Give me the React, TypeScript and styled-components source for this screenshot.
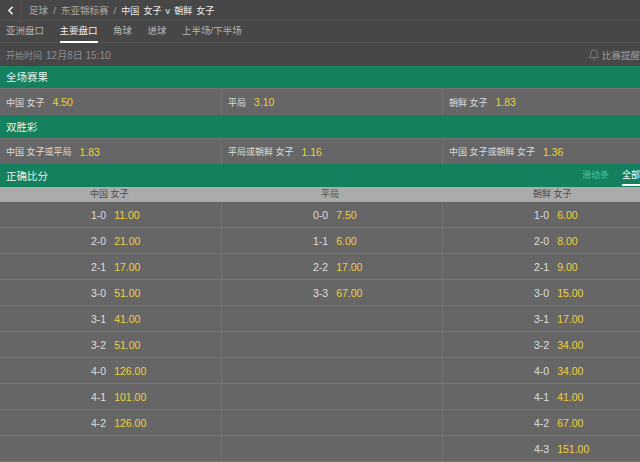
import React from 'react'
import styled, { createGlobalStyle } from 'styled-components'
import { Bell, ChevronLeft } from 'lucide-react'

const GlobalStyle = createGlobalStyle`
html, body {
    margin: 0;
    padding: 0;
    background: #666666;
    overflow: hidden;
}
* {
    box-sizing: border-box;
}
`
const Page = styled.div`
width: 640px;
height: 462px;
overflow: hidden;
font-family: "Liberation Sans", "Noto Sans CJK SC", sans-serif;
font-size: 9.5px;
color: #dcdcdc;
background: #666666;
`
const Crumbs = styled.div`
height: 21px;
display: flex;
align-items: center;
background: #474747;
border-bottom: 1px solid #525252;
`
const Back = styled.div`
width: 22px;
height: 20px;
display: flex;
align-items: center;
justify-content: center;
color: #f0f0f0;
border-right: 1px solid #525252;
`
const Crumb = styled.span<{ $strong?: boolean }>`
margin-left: ${p => (p.$strong ? '0' : '7px')};
color: ${p => (p.$strong ? '#eeeeee' : '#a8a8a8')};
font-size: ${p => (p.$strong ? '9px' : '9.5px')};
word-spacing: ${p => (p.$strong ? '1.6px' : '2.5px')};
white-space: pre;
`
const Tabs = styled.div`
height: 22px;
display: flex;
gap: 15.5px;
padding-left: 6px;
background: #474747;
border-bottom: 1px solid #525252;
`
const Tab = styled.div<{ $active?: boolean }>`
height: 22px;
line-height: 20px;
color: ${p => (p.$active ? '#eeeeee' : '#b4b4b4')};
border-bottom: 2px solid ${p => (p.$active ? '#ffffff' : 'transparent')};
`
const Info = styled.div`
height: 23px;
display: flex;
align-items: center;
justify-content: space-between;
padding-left: 6px;
background: #474747;
color: #8e8e8e;
font-size: 9px;
`
const StartTime = styled.span`
margin-left: 4px;
font-size: 10px;
`
const Alert = styled.div`
display: flex;
align-items: center;
gap: 2px;
color: #a0a0a0;
font-size: 9.5px;
white-space: nowrap;
`
const SectionBar = styled.div<{ $height: number }>`
height: ${p => p.$height}px;
display: flex;
align-items: center;
justify-content: space-between;
padding-left: 6px;
padding-bottom: 1px;
background: #14805e;
color: #e8f4ef;
font-size: 10.5px;
`
const Modes = styled.div`
display: flex;
align-self: stretch;
gap: 13px;
width: 58px;
flex: none;
font-size: 9px;
white-space: nowrap;
`
const Mode = styled.div<{ $active?: boolean }>`
flex: ${p => (p.$active ? '1' : 'none')};
line-height: 22px;
color: ${p => (p.$active ? '#ffffff' : '#4cc39c')};
border-bottom: 2px solid ${p => (p.$active ? '#ffffff' : 'transparent')};
`
const OddsRow = styled.div<{ $height: number }>`
height: ${p => p.$height}px;
display: grid;
grid-template-columns: 221px 221px 198px;
background: #666666;
border-top: 1px solid #737373;
`
const OddsCell = styled.div`
display: flex;
align-items: center;
gap: 8px;
padding-left: 6px;
border-left: 1px solid #727272;
font-size: 9px;
&:first-child {
    border-left: 0;
}
`
const Price = styled.span`
color: #f0d040;
font-size: 10.5px;
`
const ScoreHead = styled.div`
height: 15px;
display: grid;
grid-template-columns: 221px 221px 198px;
background: #ababab;
color: #4e4e4e;
font-size: 9px;
line-height: 15px;
`
const HeadCell = styled.div<{ $shift: number }>`
padding-left: ${p => p.$shift}px;
white-space: nowrap;
`
const ScoreRow = styled.div`
height: 26px;
display: grid;
grid-template-columns: 221px 221px 198px;
border-bottom: 1px solid #767676;
`
const ScoreCell = styled.div`
display: flex;
align-items: center;
gap: 8px;
padding-left: 91px;
border-left: 1px solid #727272;
font-size: 10.5px;
color: #dedede;
&:first-child {
    border-left: 0;
}
`

type Score = [string, string] | null

const rows: [Score, Score, Score][] = [
    [['1-0', '11.00'], ['0-0', '7.50'], ['1-0', '6.00']],
    [['2-0', '21.00'], ['1-1', '6.00'], ['2-0', '8.00']],
    [['2-1', '17.00'], ['2-2', '17.00'], ['2-1', '9.00']],
    [['3-0', '51.00'], ['3-3', '67.00'], ['3-0', '15.00']],
    [['3-1', '41.00'], null, ['3-1', '17.00']],
    [['3-2', '51.00'], null, ['3-2', '34.00']],
    [['4-0', '126.00'], null, ['4-0', '34.00']],
    [['4-1', '101.00'], null, ['4-1', '41.00']],
    [['4-2', '126.00'], null, ['4-2', '67.00']],
    [null, null, ['4-3', '151.00']],
]

function App() {
    return (
        <>
            <GlobalStyle />
            <Page>
                <Crumbs>
                    <Back><ChevronLeft size={13} strokeWidth={3} /></Back>
                    <Crumb>足球 / 东亚锦标赛 / </Crumb>
                    <Crumb $strong>中国 女子 v 朝鲜 女子</Crumb>
                </Crumbs>
                <Tabs>
                    <Tab>亚洲盘口</Tab>
                    <Tab $active>主要盘口</Tab>
                    <Tab>角球</Tab>
                    <Tab>进球</Tab>
                    <Tab>上半场/下半场</Tab>
                </Tabs>
                <Info>
                    <span>开始时间<StartTime>12月8日 15:10</StartTime></span>
                    <Alert><Bell size={12} strokeWidth={1.2} />比赛提醒</Alert>
                </Info>
                <SectionBar $height={22}>全场赛果</SectionBar>
                <OddsRow $height={27}>
                    <OddsCell>中国 女子 <Price>4.50</Price></OddsCell>
                    <OddsCell>平局 <Price>3.10</Price></OddsCell>
                    <OddsCell>朝鲜 女子 <Price>1.83</Price></OddsCell>
                </OddsRow>
                <SectionBar $height={23}>双胜彩</SectionBar>
                <OddsRow $height={26}>
                    <OddsCell>中国 女子或平局 <Price>1.83</Price></OddsCell>
                    <OddsCell>平局或朝鲜 女子 <Price>1.16</Price></OddsCell>
                    <OddsCell>中国 女子或朝鲜 女子 <Price>1.36</Price></OddsCell>
                </OddsRow>
                <SectionBar $height={23}>
                    正确比分
                    <Modes>
                        <Mode>滑动条</Mode>
                        <Mode $active>全部</Mode>
                    </Modes>
                </SectionBar>
                <ScoreHead>
                    <HeadCell $shift={90}>中国 女子</HeadCell>
                    <HeadCell $shift={100}>平局</HeadCell>
                    <HeadCell $shift={91}>朝鲜 女子</HeadCell>
                </ScoreHead>
                {rows.map((row, i) => (
                    <ScoreRow key={i}>
                        {row.map((cell, j) => (
                            <ScoreCell key={j}>
                                {cell && <span>{cell[0]}</span>}
                                {cell && <Price>{cell[1]}</Price>}
                            </ScoreCell>
                        ))}
                    </ScoreRow>
                ))}
            </Page>
        </>
    )
}

export default App
